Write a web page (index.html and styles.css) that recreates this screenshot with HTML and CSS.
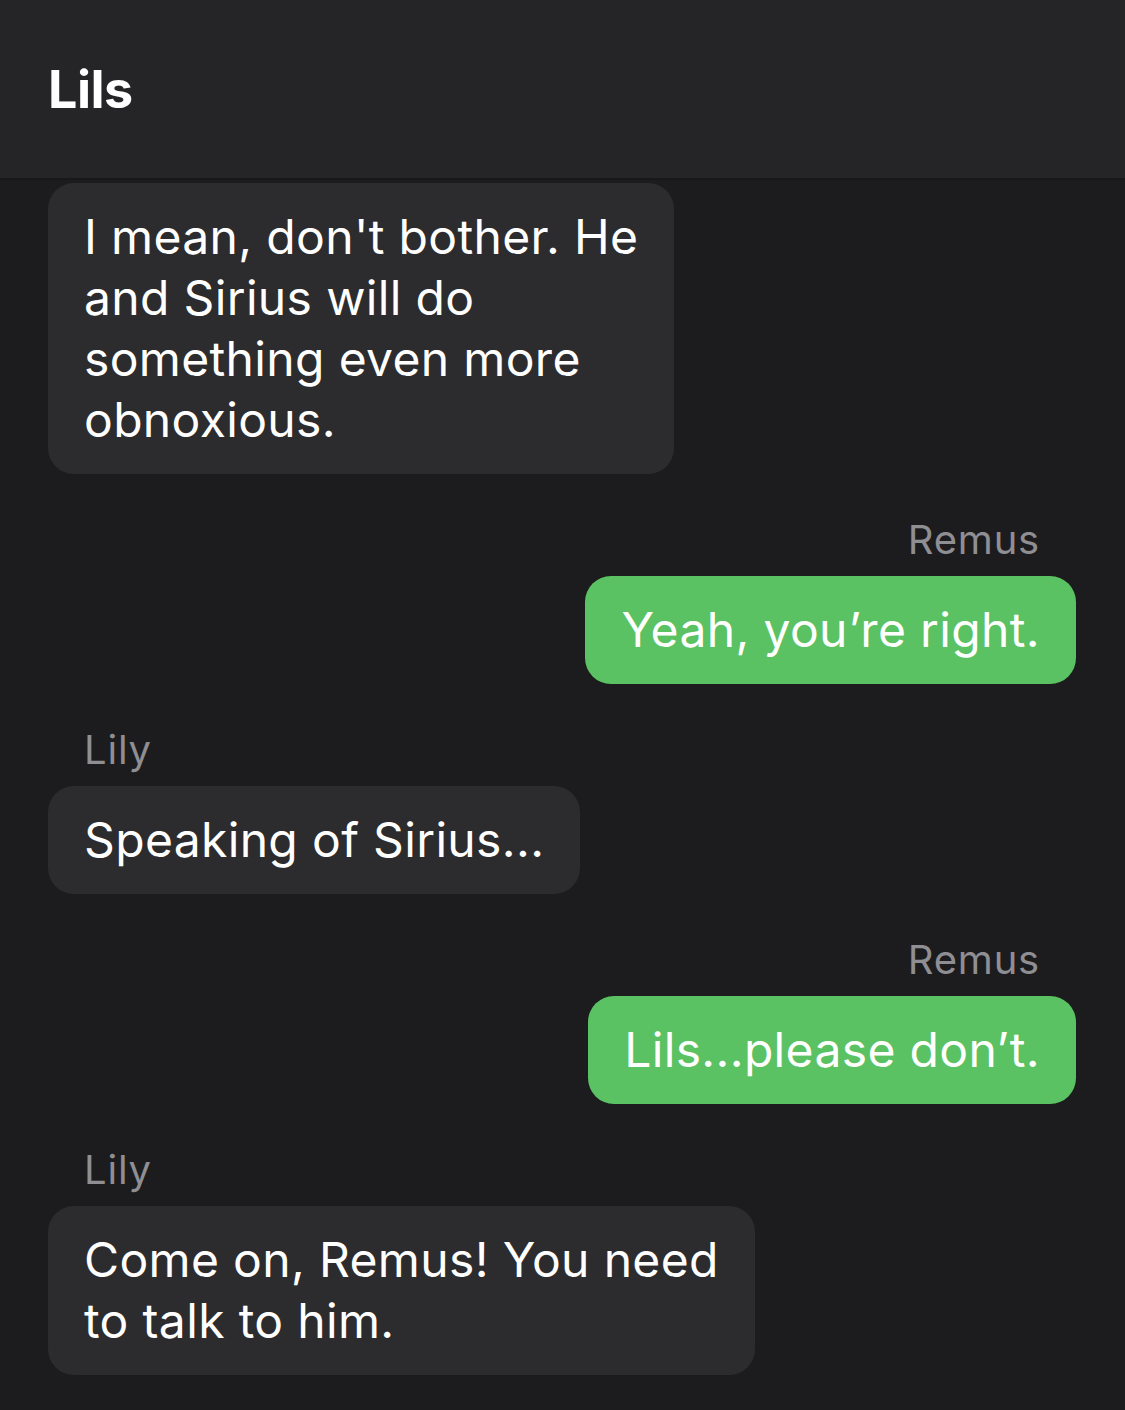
FILE: index.html
```html
<!DOCTYPE html>
<html lang="en">
<head>
  <meta charset="UTF-8">
  <title>Lils</title>
  <link rel="stylesheet" href="styles.css">
</head>
<body>
  <header class="topbar">
    <h1>Lils</h1>
  </header>

  <main class="chat">
    <div class="group in">
      <div class="bubble">I mean, don't bother. He<br>and Sirius will do<br>something even more<br>obnoxious.</div>
    </div>

    <div class="group out">
      <div class="sender">Remus</div>
      <div class="bubble">Yeah, you’re right.</div>
    </div>

    <div class="group in">
      <div class="sender">Lily</div>
      <div class="bubble">Speaking of Sirius...</div>
    </div>

    <div class="group out">
      <div class="sender">Remus</div>
      <div class="bubble">Lils...please don’t.</div>
    </div>

    <div class="group in">
      <div class="sender">Lily</div>
      <div class="bubble">Come on, Remus! You need<br>to talk to him.</div>
    </div>
  </main>
</body>
</html>
```

FILE: styles.css
```css
body {
  margin: 0;
  background-color: #1c1c1e;
  font-family: Inter, "Noto Sans", sans-serif;
  color: #fff;
}
.topbar {
  height: 180px;
  background-color: #252527;
  border-bottom: 2px solid #18181a;
  box-sizing: border-box;
  display: flex;
  align-items: center;
  padding-left: 48px;
}
.topbar h1 {
  margin: 0;
  font-size: 52px;
  font-weight: 700;
  letter-spacing: -0.5px;
}
.chat {
  display: flex;
  flex-direction: column;
  gap: 42px;
  padding: 3px 49px 36px 48px;
}
.group {
  display: flex;
  flex-direction: column;
  gap: 12px;
}
.group.in {
  align-items: flex-start;
}
.group.out {
  align-items: flex-end;
}
.sender {
  font-size: 40px;
  line-height: 48px;
  letter-spacing: 0.8px;
  color: #8e8e93;
  padding: 0 36px;
}
.bubble {
  font-size: 48px;
  line-height: 61px;
  letter-spacing: 0.35px;
  padding: 23px 36px 24px;
  border-radius: 26px;
  background-color: #2c2c2e;
  white-space: nowrap;
}
.out .bubble {
  background-color: #5ac262;
}
```
